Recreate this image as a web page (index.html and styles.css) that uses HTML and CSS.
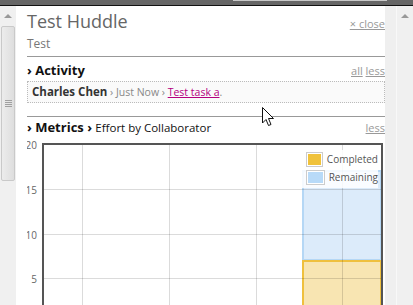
FILE: index.html
```html
<!DOCTYPE html>
<html lang="en">
<head>
    <meta charset="UTF-8">
    <title>Test Huddle</title>
    <link rel="stylesheet" href="styles.css">
</head>
<body>
    <div class="topbar"><div class="topbar-tab"></div></div>
    <div class="frame">
        <div class="scroll scroll-left">
            <div class="arrow-up"></div>
            <div class="thumb"><span class="grip"></span></div>
        </div>

        <div class="panel">
            <div class="header">
                <div class="title">Test Huddle</div>
                <a class="close" href="#">× close</a>
            </div>
            <div class="subtitle">Test</div>

            <div class="section-head">
                <h2><span class="chev">›</span> Activity</h2>
                <div class="links"><a href="#">all</a> <a href="#">less</a></div>
            </div>
            <div class="activity">
                <div class="entry">
                    <b>Charles Chen</b> <span class="sep">›</span> <span class="when">Just Now</span> <span class="sep">›</span> <a class="task" href="#">Test task a</a>.
                </div>
            </div>

            <div class="section-head metrics-head">
                <h2><span class="chev">›</span> Metrics <span class="chev">›</span> <span class="sub">Effort by Collaborator</span></h2>
                <div class="links"><a href="#">less</a></div>
            </div>

            <div class="chart">
                <svg width="358" height="170">
                    <!-- bars -->
                    <rect x="276" y="32" width="78" height="89" fill="#dcebfa" stroke="#b5d7f5" stroke-width="2"/>
                    <rect x="276" y="122" width="78" height="70" fill="#f8e5b2" stroke="#efc03e" stroke-width="2"/>
                    <!-- grid -->
                    <g stroke="rgba(0,0,0,0.14)" stroke-width="1">
                        <line x1="17" y1="50.5" x2="354" y2="50.5"/>
                        <line x1="17" y1="95.5" x2="354" y2="95.5"/>
                        <line x1="17" y1="139.5" x2="354" y2="139.5"/>
                        <line x1="55.5" y1="6" x2="55.5" y2="170"/>
                        <line x1="142.5" y1="6" x2="142.5" y2="170"/>
                        <line x1="229.5" y1="6" x2="229.5" y2="170"/>
                        <line x1="315.5" y1="6" x2="315.5" y2="170"/>
                    </g>
                    <!-- axes -->
                    <rect x="15" y="4" width="341" height="2" fill="#555"/>
                    <rect x="15" y="4" width="2" height="166" fill="#555"/>
                    <rect x="354" y="4" width="2" height="166" fill="#555"/>
                    <g class="ticks" text-anchor="end">
                        <text x="10" y="10">20</text>
                        <text x="10" y="55">15</text>
                        <text x="10" y="100">10</text>
                        <text x="10" y="144">5</text>
                    </g>
                </svg>
                <div class="legend">
                    <div class="legend-row"><span class="swatch"><i class="done"></i></span>Completed</div>
                    <div class="legend-row"><span class="swatch"><i class="left"></i></span>Remaining</div>
                </div>
            </div>
        </div>

        <div class="scroll scroll-right">
            <div class="arrow-up"></div>
        </div>
    </div>

    <svg class="cursor" width="13" height="21" viewBox="0 0 13 21">
        <path d="M0.5 0.5 L0.5 16 L4 12.5 L6.5 18.5 L9 17.5 L6.5 11.5 L11.5 11.5 Z" fill="#fff" stroke="#111" stroke-width="1"/>
    </svg>
</body>
</html>
```
FILE: styles.css
```css
body {
    margin: 0;
    width: 413px;
    height: 305px;
    overflow: hidden;
    background-color: #efefef;
    font-family: "Open Sans", "Liberation Sans", sans-serif;
    position: relative;
}

.topbar {
    height: 5px;
    background-color: #666;
    border-bottom: 1px solid #111;
}

.topbar-tab {
    margin-left: 233px;
    width: 154px;
    height: 1px;
    background-color: #c8c8c8;
}

.frame {
    display: flex;
    height: 299px;
}

.scroll {
    width: 16px;
    background-color: #f0f0f0;
    display: flex;
    flex-direction: column;
    align-items: center;
}

.scroll-right {
    margin-left: 11px;
    border-left: 1px solid #f8f8f8;
}

.arrow-up {
    margin-top: 8px;
    width: 0;
    height: 0;
    border-left: 4px solid transparent;
    border-right: 4px solid transparent;
    border-bottom: 4px solid #999;
}

.thumb {
    margin-top: 8px;
    width: 12px;
    height: 153px;
    border: 1px solid #c9c9c9;
    border-radius: 2px;
    background: linear-gradient(to right, #ececec, #dedede);
    display: flex;
    align-items: center;
    justify-content: center;
}

.grip {
    width: 7px;
    height: 7px;
    background: repeating-linear-gradient(to bottom, #a0a0a0 0, #a0a0a0 1px, transparent 1px, transparent 2px);
}

.panel {
    width: 358px;
    padding: 3px 0 0 11px;
    background-color: #fff;
    position: relative;
}

.header {
    display: flex;
    justify-content: space-between;
    align-items: baseline;
}

.title {
    font-size: 18px;
    line-height: 24px;
    color: #666;
}

.close,
.links a {
    font-size: 11px;
    color: #999;
    text-decoration: underline;
}

.links {
    font-size: 11px;
    line-height: 15px;
}

.subtitle {
    margin-top: 3px;
    font-size: 12px;
    line-height: 16px;
    color: #777;
    padding-bottom: 4px;
    border-bottom: 1px solid #999;
}

.section-head {
    display: flex;
    justify-content: space-between;
    align-items: baseline;
    padding-top: 4px;
}

.section-head h2 {
    margin: 0;
    font-size: 13px;
    line-height: 19px;
    font-weight: bold;
    color: #111;
}

.chev {
    font-weight: bold;
}

.sub {
    font-weight: normal;
    font-size: 11.5px;
}

.activity {
    margin-top: 1px;
    border: 1px dotted #bbb;
    background-color: #fafafa;
    padding: 2px 4px;
    font-size: 10.5px;
    line-height: 15px;
    color: #888;
}

.activity b {
    color: #333;
    font-size: 11.5px;
}

.task {
    color: #b5007f;
}

.metrics-head {
    margin-top: 13px;
    border-top: 1px solid #999;
    padding-top: 1px;
}

.chart {
    position: relative;
    height: 170px;
    margin-top: 2px;
}

.chart svg {
    display: block;
}

.ticks text {
    font-size: 10px;
    fill: #666;
}

.legend {
    position: absolute;
    left: 275px;
    top: 11px;
    width: 76px;
    padding: 0 0 2px 4px;
    background-color: rgba(255, 255, 255, 0.85);
    box-sizing: border-box;
}

.legend-row {
    display: flex;
    align-items: center;
    gap: 4px;
    font-size: 10px;
    line-height: 18px;
    color: #555;
}

.swatch {
    width: 16px;
    height: 11px;
    border: 1px solid #ccc;
    padding: 1px;
    background-color: #fff;
}

.swatch i {
    display: block;
    height: 100%;
}

.swatch .done {
    background-color: #f0c23b;
}

.swatch .left {
    background-color: #b8daf8;
}

.cursor {
    position: absolute;
    left: 262px;
    top: 107px;
}
```
